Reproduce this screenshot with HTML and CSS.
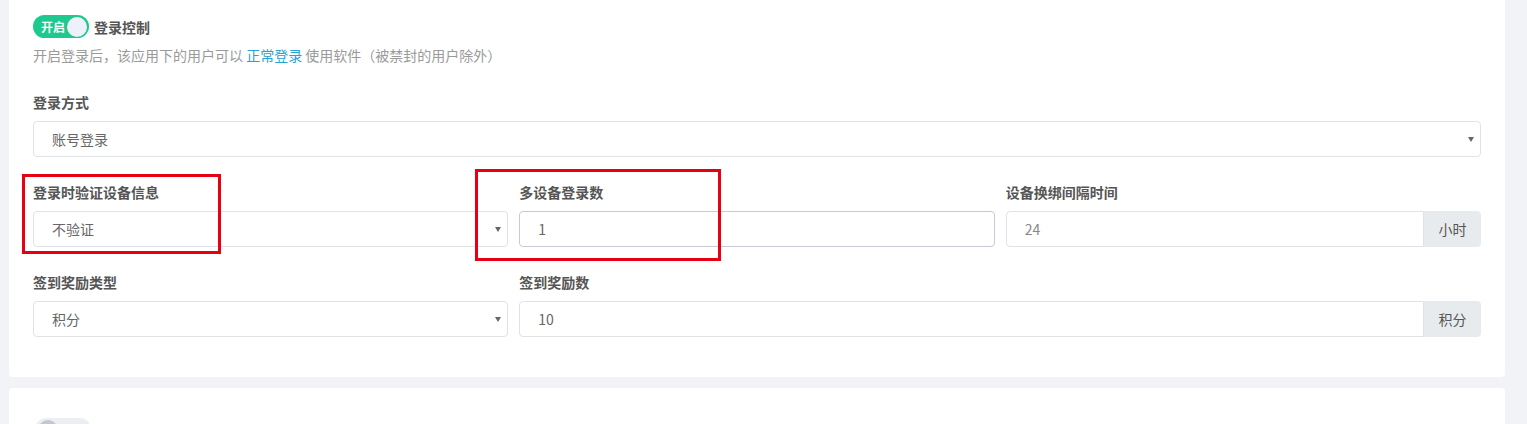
FILE: index.html
```html
<!DOCTYPE html>
<html lang="zh-CN">
<head>
	<meta charset="utf-8">
	<title>登录控制</title>
	<link rel="stylesheet" href="styles.css">
</head>
<body>
	<div class="page">
		<div class="card">
			<div class="switch-row">
				<span class="switch on"><span class="switch-text">开启</span><span class="knob"></span></span>
				<span class="switch-title">登录控制</span>
			</div>
			<p class="desc">开启登录后，该应用下的用户可以 <a href="#" class="link">正常登录</a> 使用软件（被禁封的用户除外）</p>

			<div class="field">
				<label class="label">登录方式</label>
				<div class="select-wrap">
					<select class="control">
						<option>账号登录</option>
					</select>
				</div>
			</div>

			<div class="grid">
				<div class="field">
					<label class="label">登录时验证设备信息</label>
					<div class="select-wrap">
						<select class="control">
							<option>不验证</option>
						</select>
					</div>
				</div>
				<div class="field">
					<label class="label">多设备登录数</label>
					<input class="control focus" type="text" value="1">
				</div>
				<div class="field">
					<label class="label">设备换绑间隔时间</label>
					<div class="input-group">
						<input class="control muted" type="text" value="24">
						<span class="addon">小时</span>
					</div>
				</div>
			</div>

			<div class="grid">
				<div class="field">
					<label class="label">签到奖励类型</label>
					<div class="select-wrap">
						<select class="control">
							<option>积分</option>
						</select>
					</div>
				</div>
				<div class="field span-2">
					<label class="label">签到奖励数</label>
					<div class="input-group">
						<input class="control" type="text" value="10">
						<span class="addon">积分</span>
					</div>
				</div>
			</div>

			<div class="mark mark-1"></div>
			<div class="mark mark-2"></div>
		</div>

		<div class="card next">
			<div class="switch-row">
				<span class="switch off"><span class="knob"></span></span>
			</div>
		</div>
	</div>
</body>
</html>
```

FILE: styles.css
```css
html, body {
	margin: 0;
	padding: 0;
}
body {
	font-family: "Noto Sans CJK SC", "Noto Sans", sans-serif;
	font-size: 14px;
	color: #555;
	background-color: #f2f3f7;
	overflow: hidden;
}
.page {
	margin-top: -13px;
	padding-left: 9px;
	width: 1496px;
}
.card {
	position: relative;
	background-color: #fff;
	border-radius: 4px;
	padding: 28px 24px 40px;
	margin-bottom: 11px;
}
.card.next {
	padding-top: 30px;
}
.switch-row {
	display: flex;
	align-items: center;
	height: 23px;
}
.switch {
	display: inline-flex;
	align-items: center;
	justify-content: space-between;
	width: 56px;
	height: 23px;
	border-radius: 12px;
	padding: 0 2px 0 8px;
	box-sizing: border-box;
}
.switch.on {
	background-color: #1dc98e;
}
.switch.off {
	background-color: #eceef3;
	padding: 0 8px 0 3px;
	margin-left: 2px;
}
.switch-text {
	color: #fff;
	font-size: 12px;
	font-weight: bold;
	line-height: 23px;
}
.knob {
	width: 20px;
	height: 20px;
	border-radius: 50%;
	background-color: #eef0fa;
}
.switch.off .knob {
	background-color: #c4c7cf;
}
.switch-title {
	margin-left: 5px;
	font-weight: bold;
	color: #555;
	line-height: 20px;
}
.desc {
	margin: 7px 0 0;
	line-height: 20px;
	color: #9a9a9a;
}
.link {
	color: #2b9fd0;
	text-decoration: none;
}
.field {
	margin-top: 27px;
}
.grid {
	display: grid;
	grid-template-columns: repeat(3, 1fr);
	column-gap: 11px;
}
.grid .field {
	margin-top: 25px;
}
.span-2 {
	grid-column: span 2;
}
.label {
	display: block;
	font-weight: bold;
	line-height: 20px;
	margin-bottom: 9px;
	color: #555;
}
.control {
	display: block;
	width: 100%;
	height: 36px;
	box-sizing: border-box;
	border: 1px solid #dfe2e7;
	border-radius: 4px;
	background-color: #fff;
	padding: 0 18px;
	font-family: inherit;
	font-size: 14px;
	color: #666;
	outline: none;
}
.control.focus {
	border-color: #c6cbd3;
}
.control.muted {
	color: #888;
}
select.control {
	appearance: none;
	-webkit-appearance: none;
}
.select-wrap {
	position: relative;
}
.select-wrap::after {
	content: "";
	position: absolute;
	right: 7px;
	top: 16px;
	border-left: 3px solid transparent;
	border-right: 3px solid transparent;
	border-top: 5px solid #666;
}
.input-group {
	display: flex;
}
.input-group .control {
	border-radius: 4px 0 0 4px;
	flex: 1;
	min-width: 0;
}
.addon {
	display: flex;
	align-items: center;
	justify-content: center;
	width: 57px;
	height: 36px;
	box-sizing: border-box;
	background-color: #e8ebee;
	border-radius: 0 4px 4px 0;
	color: #555;
}
.mark {
	position: absolute;
	border: 3px solid #e60012;
	box-sizing: border-box;
}
.mark-1 {
	left: 13px;
	top: 187px;
	width: 199px;
	height: 80px;
}
.mark-2 {
	left: 466px;
	top: 182px;
	width: 246px;
	height: 92px;
}
```
